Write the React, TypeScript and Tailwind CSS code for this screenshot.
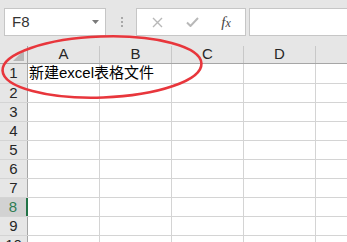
import React from 'react';

const font = { fontFamily: '"Liberation Sans", "Noto Sans CJK SC", sans-serif' };
const cols = ['A', 'B', 'C', 'D', ''];
const rows = [1, 2, 3, 4, 5, 6, 7, 8, 9, 10];

function ColCell({ label, last }: { label: string; last?: boolean }) {
  return (
    <div
      className={`${last ? 'flex-1' : 'w-[72px] shrink-0 border-r border-[#c8c8c8]'} flex items-center justify-center text-[15px] text-[#262626]`}
    >
      {label}
    </div>
  );
}

export default function App() {
  return (
    <div className="relative w-[347px] h-[242px] overflow-hidden bg-white select-none" style={font}>
      {/* formula bar */}
      <div className="h-[46px] bg-[#e6e6e6] flex items-start pt-[8px] pl-[4px] gap-0">
        <div className="w-[102px] h-[28px] bg-white border border-[#c6c6c6] flex items-center justify-between pl-[7px] pr-[6px]">
          <span className="text-[15px] text-[#333]">F8</span>
          <svg width="7" height="4" viewBox="0 0 7 4">
            <path d="M0 0h7L3.5 4z" fill="#7a7a7a" />
          </svg>
        </div>
        <div className="w-[30px] h-[28px] flex flex-col items-center justify-center gap-[2px] pl-[1px]">
          <span className="w-[2px] h-[2px] bg-[#a8a8a8]" />
          <span className="w-[2px] h-[2px] bg-[#a8a8a8]" />
          <span className="w-[2px] h-[2px] bg-[#a8a8a8]" />
        </div>
        <div className="w-[110px] h-[28px] bg-white border border-[#c6c6c6] flex items-center">
          <div className="w-[38px] flex justify-center pl-[2px]">
            <svg width="11" height="11" viewBox="0 0 11 11">
              <path d="M1 1l9 9M10 1l-9 9" stroke="#b8b8b8" strokeWidth="1.4" />
            </svg>
          </div>
          <div className="w-[34px] flex justify-center">
            <svg width="13" height="10" viewBox="0 0 13 10">
              <path d="M1 5.5l3.5 3.5L12 1" stroke="#b8b8b8" strokeWidth="2" fill="none" />
            </svg>
          </div>
          <div className="flex-1 flex justify-center pr-[2px]">
            <span className="text-[15px] italic text-[#444]" style={{ fontFamily: '"Liberation Serif", serif' }}>
              f<span className="text-[12px]">x</span>
            </span>
          </div>
        </div>
        <div className="ml-[3px] flex-1 h-[28px] bg-white border border-[#c6c6c6] border-r-0" />
      </div>

      {/* column header */}
      <div className="flex h-[18px] bg-[#e6e6e6] border-b border-[#a6a6a6]">
        <div className="w-[28px] shrink-0 border-r border-[#a6a6a6] flex items-end justify-end pr-[3px] pb-[2px]">
          <svg width="11" height="11" viewBox="0 0 11 11">
            <path d="M11 0v11H0z" fill="#b7b7b7" />
          </svg>
        </div>
        {cols.map((c, i) => (
          <ColCell key={i} label={c} last={i === cols.length - 1} />
        ))}
      </div>

      {/* rows */}
      {rows.map((r) => {
        const sel = r === 8;
        return (
          <div key={r} className={`flex ${r === 1 ? 'h-[20px]' : 'h-[19px]'} border-b border-[#d4d4d4]`}>
            <div
              className={`w-[28px] shrink-0 flex items-center justify-center text-[15px] ${
                sel ? 'bg-[#d2d2d2] text-[#2e7d52] border-r-2 border-[#217346]' : 'bg-[#e6e6e6] text-[#262626] border-r border-[#a6a6a6]'
              }`}
            >
              {r}
            </div>
            {cols.map((c, i) => (
              <div
                key={i}
                className={`${i === cols.length - 1 ? 'flex-1' : 'w-[72px] shrink-0 border-r border-[#d4d4d4]'} ${
                  i === 0 ? 'overflow-visible whitespace-nowrap' : ''
                } flex items-center pl-[1px] text-[15px] text-black`}
              >
                {r === 1 && i === 0 ? <span className="relative z-10">新建excel表格文件</span> : null}
              </div>
            ))}
          </div>
        );
      })}

      {/* red annotation ellipse */}
      <svg className="absolute left-0 top-0 pointer-events-none" width="347" height="242">
        <ellipse cx="102" cy="67" rx="99.5" ry="30.5" transform="rotate(-2 102 67)" fill="none" stroke="#e8363c" strokeWidth="2.6" />
      </svg>
    </div>
  );
}
